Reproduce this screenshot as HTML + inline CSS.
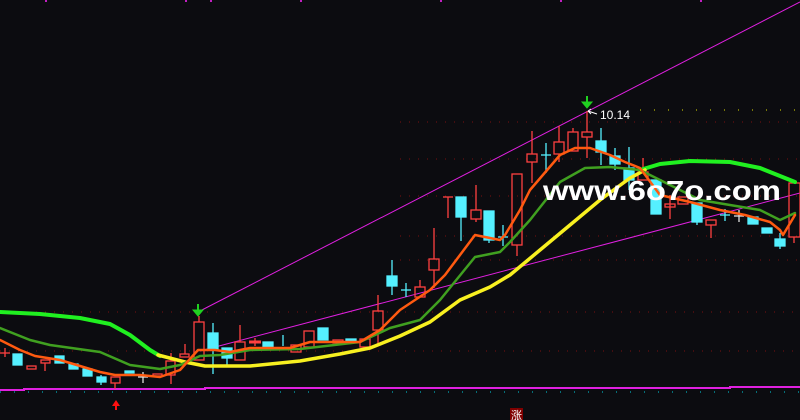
<!DOCTYPE html>
<html><head><meta charset="utf-8"><style>
html,body{margin:0;padding:0;background:#0c0c10;}
svg{display:block}
</style></head><body>
<svg width="800" height="420" viewBox="0 0 800 420" xmlns="http://www.w3.org/2000/svg">
<rect width="800" height="420" fill="#0c0c10"/>
<!-- grid dotted -->
<g stroke="#7a1010" stroke-width="1" stroke-dasharray="1 8">
<line x1="0" y1="312" x2="800" y2="312"/>
<line x1="0" y1="351" x2="800" y2="351"/>
<line x1="400" y1="260" x2="800" y2="260"/>
<line x1="400" y1="159" x2="800" y2="159"/>
<line x1="400" y1="122" x2="800" y2="122"/>
<line x1="400" y1="196" x2="800" y2="196"/>
<line x1="400" y1="236" x2="800" y2="236"/>
</g>
<line x1="640" y1="110" x2="800" y2="110" stroke="#e0e000" stroke-dasharray="1 13"/>
<line x1="0" y1="392" x2="800" y2="392" stroke="#00d0e0" stroke-dasharray="1 13"/>
<!-- top magenta ticks -->
<g fill="#c020c0"><rect x="45" y="0" width="2" height="2"/><rect x="185" y="0" width="2" height="2"/><rect x="210" y="0" width="2" height="2"/><rect x="300" y="0" width="2" height="2"/><rect x="440" y="0" width="2" height="2"/><rect x="560" y="0" width="2" height="2"/><rect x="700" y="0" width="2" height="2"/></g>
<!-- magenta channel -->
<g stroke="#e020e0" stroke-width="1" fill="none">
<line x1="198" y1="312" x2="800" y2="2"/>
<line x1="200" y1="351" x2="800" y2="193"/>
<polyline points="0,390 24,390 24,389 205,389 205,388 730,388 730,387 800,387" stroke-width="2"/>
</g>
<!-- candles -->
<g stroke-width="1.3">
<g stroke="#ff4040" fill="none">
<line x1="5" y1="348" x2="5" y2="357"/><line x1="0" y1="353" x2="10" y2="353"/>
<rect x="27" y="366" width="9" height="3"/>
<rect x="41" y="360" width="9" height="3"/><line x1="45" y1="363" x2="45" y2="371"/>
<rect x="111" y="377" width="9" height="6"/><line x1="115" y1="383" x2="115" y2="389"/>
<rect x="153" y="374" width="9" height="2"/>
<rect x="166" y="361" width="9" height="14"/><line x1="171" y1="353" x2="171" y2="361"/><line x1="171" y1="375" x2="171" y2="384"/>
<rect x="180" y="354" width="9" height="3"/><line x1="185" y1="344" x2="185" y2="354"/>
<rect x="194" y="322" width="10" height="38"/><line x1="199" y1="316" x2="199" y2="322"/>
<rect x="235" y="342" width="10" height="18"/><line x1="240" y1="325" x2="240" y2="342"/>
<line x1="249" y1="342" x2="261" y2="342" stroke-width="3"/><line x1="255" y1="338" x2="255" y2="346"/>
<rect x="291" y="345" width="10" height="7"/>
<rect x="304" y="331" width="10" height="16"/>
<rect x="333" y="340" width="10" height="3"/>
<rect x="360" y="339" width="10" height="8"/>
<rect x="373" y="311" width="10" height="19"/><line x1="378" y1="295" x2="378" y2="311"/><line x1="378" y1="330" x2="378" y2="345"/>
<rect x="415" y="287" width="10" height="10"/><line x1="420" y1="280" x2="420" y2="287"/>
<rect x="429" y="259" width="10" height="11"/><line x1="434" y1="228" x2="434" y2="259"/><line x1="434" y1="270" x2="434" y2="288"/>
<line x1="443" y1="197" x2="453" y2="197"/><line x1="448" y1="197" x2="448" y2="218"/>
<rect x="471" y="210" width="10" height="9"/><line x1="476" y1="185" x2="476" y2="210"/><line x1="476" y1="219" x2="476" y2="222"/>
<rect x="512" y="174" width="10" height="71"/><line x1="517" y1="245" x2="517" y2="256"/>
<rect x="527" y="154" width="10" height="8"/><line x1="532" y1="131" x2="532" y2="154"/><line x1="532" y1="162" x2="532" y2="183"/>
<rect x="554" y="142" width="10" height="12"/><line x1="559" y1="126" x2="559" y2="142"/><line x1="559" y1="154" x2="559" y2="162"/>
<rect x="568" y="132" width="10" height="19"/><line x1="573" y1="128" x2="573" y2="132"/>
<rect x="582" y="132" width="10" height="5"/><line x1="587" y1="111" x2="587" y2="132"/><line x1="587" y1="137" x2="587" y2="158"/>
<rect x="638" y="172" width="10" height="8"/><line x1="643" y1="158" x2="643" y2="172"/>
<rect x="665" y="204" width="10" height="3"/><line x1="670" y1="195" x2="670" y2="219"/>
<rect x="678" y="197" width="10" height="7"/>
<rect x="706" y="220" width="10" height="5"/><line x1="711" y1="225" x2="711" y2="238"/>
<rect x="789" y="183" width="11" height="54"/><line x1="794" y1="237" x2="794" y2="243"/>
</g>
<g fill="#55f0ff" stroke="#55f0ff">
<rect x="13" y="354" width="9" height="11"/>
<rect x="55" y="356" width="9" height="7"/>
<rect x="69" y="364" width="9" height="5"/>
<rect x="83" y="369" width="9" height="7"/>
<rect x="97" y="377" width="9" height="5"/><line x1="101" y1="375" x2="101" y2="385"/>
<rect x="125" y="371" width="9" height="2"/>
<rect x="208" y="333" width="10" height="17"/><line x1="213" y1="323" x2="213" y2="374"/>
<rect x="222" y="348" width="10" height="10"/><line x1="227" y1="358" x2="227" y2="365"/>
<rect x="263" y="342" width="10" height="6"/>
<line x1="283" y1="335" x2="283" y2="346"/>
<rect x="318" y="328" width="10" height="12"/>
<rect x="346" y="339" width="10" height="3"/>
<rect x="387" y="276" width="10" height="10"/><line x1="392" y1="260" x2="392" y2="295"/>
<line x1="401" y1="290" x2="411" y2="290"/><line x1="406" y1="283" x2="406" y2="297"/>
<rect x="456" y="197" width="10" height="20"/><line x1="461" y1="217" x2="461" y2="241"/>
<rect x="484" y="211" width="10" height="29"/><line x1="489" y1="240" x2="489" y2="243"/>
<line x1="498" y1="237" x2="508" y2="237"/><line x1="503" y1="225" x2="503" y2="246"/>
<line x1="541" y1="155" x2="551" y2="155"/><line x1="546" y1="143" x2="546" y2="173"/>
<rect x="596" y="141" width="10" height="11"/><line x1="601" y1="128" x2="601" y2="165"/>
<rect x="610" y="156" width="10" height="8"/><line x1="615" y1="148" x2="615" y2="170"/>
<rect x="624" y="168" width="10" height="12"/><line x1="629" y1="147" x2="629" y2="190"/>
<rect x="651" y="180" width="10" height="34"/>
<rect x="692" y="203" width="10" height="19"/><line x1="697" y1="222" x2="697" y2="225"/>
<line x1="720" y1="215" x2="730" y2="215"/><line x1="725" y1="209" x2="725" y2="221"/>
<rect x="748" y="217" width="10" height="7"/>
<rect x="762" y="228" width="10" height="5"/>
<rect x="775" y="239" width="10" height="7"/><line x1="780" y1="233" x2="780" y2="249"/>
</g>
<g stroke="#e0e0e0">
<line x1="138" y1="377" x2="148" y2="377"/><line x1="143" y1="372" x2="143" y2="383"/>
<line x1="734" y1="216" x2="744" y2="216"/><line x1="739" y1="210" x2="739" y2="222"/>
</g>
</g>
<!-- MA lines -->
<g fill="none" stroke-linejoin="round" stroke-linecap="round">
<polyline stroke="#20f020" stroke-width="4" points="0,312 40,314 80,318 110,324 130,335 150,350 160,356"/>
<polyline stroke="#20f020" stroke-width="4" points="640,170 660,164 690,161 730,162 760,168 795,182"/>
<polyline stroke="#f8f020" stroke-width="3.5" points="158,355 185,362 205,366 250,366 300,361 340,354 370,348 400,336 430,322 460,300 490,287 510,275 540,250 570,225 600,200 630,178 645,170"/>
<polyline stroke="#40a020" stroke-width="2.5" points="0,328 30,340 50,345 100,352 130,365 160,369 180,365 200,356 220,355 250,350 300,349 360,342 390,328 420,320 440,300 475,257 500,252 510,242 530,220 560,182 585,168 610,167 640,170 650,175 670,185 700,200 760,210 780,220 795,213"/>
<polyline stroke="#ff5a10" stroke-width="2.5" points="0,340 20,350 35,356 60,360 100,372 115,375 140,375 160,377 180,370 198,350 215,350 230,352 250,348 290,348 310,342 360,342 380,330 400,310 430,290 445,275 475,235 500,240 505,235 520,210 530,190 560,155 575,148 590,148 610,155 625,162 640,168 660,195 690,202 720,210 745,215 770,222 780,230 783,235 795,215"/>
</g>
<!-- arrows -->
<g fill="#20d020" stroke="#20d020">
<line x1="198" y1="304" x2="198" y2="313" stroke-width="2"/><polygon points="193,310 203,310 198,316"/>
<line x1="587" y1="96" x2="587" y2="105" stroke-width="2"/><polygon points="582,102 592,102 587,108"/>
</g>
<polygon points="116,400 112,406 115,406 115,410 117,410 117,406 120,406" fill="#ff1010"/>
<rect x="510" y="408" width="13" height="12" fill="#800000"/>
<text x="516.5" y="419" fill="#fff" font-size="11" text-anchor="middle" font-family="Liberation Sans, Noto Sans CJK SC, sans-serif">涨</text>
<!-- label -->
<path d="M588,111 L597,114 M588,111 L591,109 M588,111 L591,114" stroke="#fff" stroke-width="1" fill="none"/>
<text x="600" y="119" fill="#fff" font-size="12" font-family="Liberation Sans, sans-serif">10.14</text>
<!-- watermark -->
<text x="543" y="200" fill="#fff" font-size="28" font-weight="bold" font-family="Liberation Sans, DejaVu Sans, sans-serif" textLength="238" lengthAdjust="spacingAndGlyphs">www.6o7o.com</text>
</svg>
</body></html>
